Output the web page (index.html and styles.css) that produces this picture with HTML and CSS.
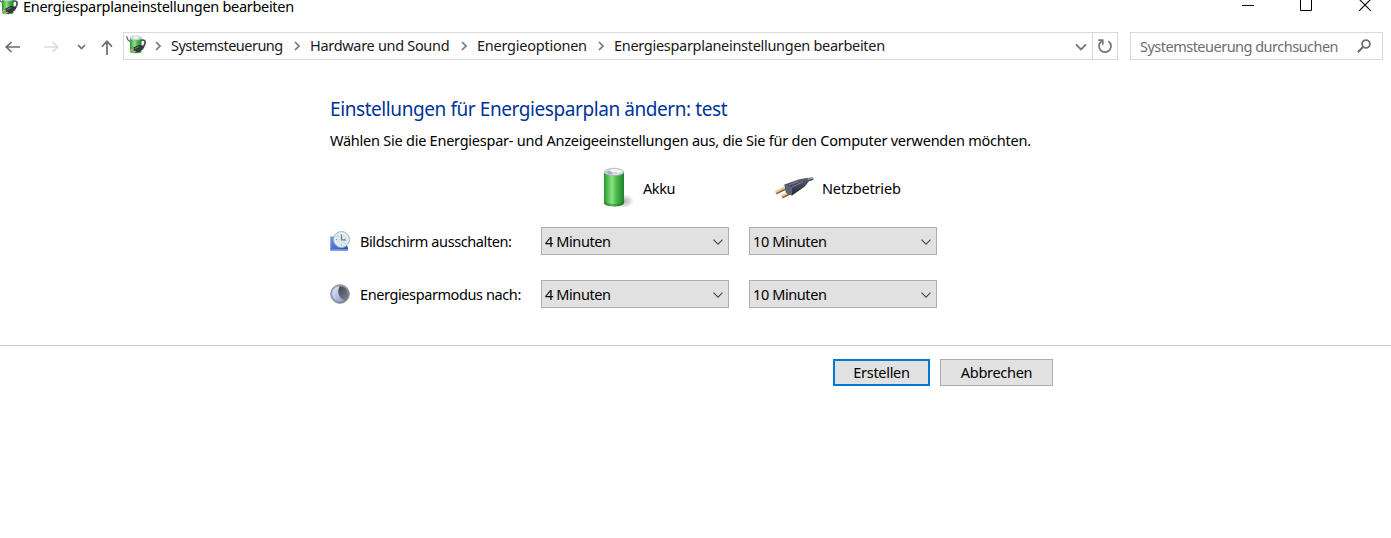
FILE: index.html
```
<!DOCTYPE html>
<html lang="de">
<head>
  <meta charset="UTF-8">
  <meta name="viewport" content="width=device-width, initial-scale=1.0">
  <title>Energiesparplaneinstellungen bearbeiten</title>
  <link rel="stylesheet" href="styles.css">
</head>
<body>

  <!-- shared icons -->
  <svg class="sprite" width="0" height="0">
    <defs>
      <linearGradient id="green" x1="0" x2="1" y1="0" y2="0">
        <stop offset="0" stop-color="#2c9433"/>
        <stop offset=".2" stop-color="#55c353"/>
        <stop offset=".4" stop-color="#8fe088"/>
        <stop offset=".6" stop-color="#4dbf4e"/>
        <stop offset="1" stop-color="#1d8028"/>
      </linearGradient>
      <linearGradient id="plug" x1="0" x2=".3" y1="0" y2="1">
        <stop offset="0" stop-color="#777d8c"/>
        <stop offset=".5" stop-color="#454b5c"/>
        <stop offset="1" stop-color="#202432"/>
      </linearGradient>
      <radialGradient id="shadow">
        <stop offset="0" stop-color="#777" stop-opacity=".6"/>
        <stop offset="1" stop-color="#777" stop-opacity="0"/>
      </radialGradient>
      <linearGradient id="screen" x1="0" x2="1" y1="0" y2="1">
        <stop offset="0" stop-color="#6f9aea"/>
        <stop offset="1" stop-color="#2547b5"/>
      </linearGradient>
      <linearGradient id="ring" x1="0" x2="1" y1="0" y2="1">
        <stop offset="0" stop-color="#b5bac3"/>
        <stop offset="1" stop-color="#686d77"/>
      </linearGradient>
      <linearGradient id="moon" x1="0" x2="1" y1="0" y2="1">
        <stop offset="0" stop-color="#e8efff"/>
        <stop offset="1" stop-color="#8297cf"/>
      </linearGradient>
      <linearGradient id="night" x1="0" x2="1" y1="0" y2="1">
        <stop offset="0" stop-color="#30333a"/>
        <stop offset="1" stop-color="#858993"/>
      </linearGradient>
      <symbol id="power" viewBox="0 0 20 20">
        <path d="M.7 1.200C1 4.500 2.500 6 5 6.500" fill="none" stroke="#59647a" stroke-width="1.300"/>
        <path d="M14.500 5.500c4-1.500 5.200.5 4.300 3.500-.7 2.500-2.300 3.500-2.700 5.500" fill="none" stroke="#40485c" stroke-width="1.700"/>
        <path d="M4 3v13.500c0 2.500 11.500 2.500 11.500 0V3z" fill="url(#green)"/>
        <ellipse cx="9.750" cy="3" rx="5.700" ry="2" fill="#d5dbe6" stroke="#9bb5ae" stroke-width=".5"/>
        <ellipse cx="9.750" cy="2.400" rx="2.500" ry="1" fill="#fff"/>
        <path d="M6.500 13l6-3 5 .5.500 2-4 4-5 1.500z" fill="#343640"/>
        <path d="M8 13.500l-4 2.300M10 16l-3.500 2" stroke="#c9a878" stroke-width="1.400"/>
        <path d="M9 13.500l4-1.800" stroke="#777c88" stroke-width="1"/>
      </symbol>
      <symbol id="chevron" viewBox="0 0 6 10">
        <path d="M1 1l4 4-4 4" fill="none" stroke="#777" stroke-width="1.700"/>
      </symbol>
    </defs>
  </svg>

  <div class="titlebar">
    <svg class="app-icon"><use href="#power"/></svg>
    <span class="window-title">Energiesparplaneinstellungen bearbeiten</span>
    <div class="window-controls">
      <svg width="12" height="12"><path d="M0 6.500h12" stroke="#000"/></svg>
      <svg width="12" height="12"><path d="M.5.5h11v11H.5z" fill="none" stroke="#000"/></svg>
      <svg width="12" height="12"><path d="M.2.200l11.600 11.600M11.800.200L.2 11.800" stroke="#000" stroke-width="1.100"/></svg>
    </div>
  </div>

  <nav class="navbar">
    <div class="arrows">
      <svg width="15" height="12"><path d="M15 6H1M6.500 1L1.200 6l5.300 5" fill="none" stroke="#6d6d6d" stroke-width="1.700"/></svg>
      <svg width="15" height="12"><path d="M0 6h14M8.500 1l5.300 5-5.300 5" fill="none" stroke="#dadada" stroke-width="1.700"/></svg>
      <svg width="9" height="6"><path d="M1 1l3.500 3.500L8 1" fill="none" stroke="#6d6d6d" stroke-width="1.700"/></svg>
      <svg width="12" height="15"><path d="M6 15V1M1 6.700L6 1.300l5 5.400" fill="none" stroke="#6d6d6d" stroke-width="1.700"/></svg>
    </div>
    <div class="address">
      <svg class="address-icon"><use href="#power"/></svg>
      <svg class="sep"><use href="#chevron"/></svg>
      <span class="crumb crumb-panel">Systemsteuerung</span>
      <svg class="sep"><use href="#chevron"/></svg>
      <span class="crumb crumb-hardware">Hardware und Sound</span>
      <svg class="sep"><use href="#chevron"/></svg>
      <span class="crumb crumb-energy">Energieoptionen</span>
      <svg class="sep"><use href="#chevron"/></svg>
      <span class="crumb crumb-edit">Energiesparplaneinstellungen bearbeiten</span>
      <svg class="address-drop" width="12" height="8"><path d="M1 1.300l5 5 5-5" fill="none" stroke="#777" stroke-width="1.900"/></svg>
      <div class="refresh">
        <svg width="16" height="16"><path d="M11.300 3.200a6 6 0 1 1-6.600 0" fill="none" stroke="#777" stroke-width="1.800"/><path d="M1.300 2.200h4.500v4.600" fill="none" stroke="#777" stroke-width="1.700"/></svg>
      </div>
    </div>
    <div class="search">
      <span>Systemsteuerung durchsuchen</span>
      <svg width="14" height="14"><circle cx="9" cy="5" r="3.900" fill="none" stroke="#707070" stroke-width="1.800"/><path d="M6.200 7.800L.8 13.200" stroke="#707070" stroke-width="2.100"/></svg>
    </div>
  </nav>

  <main class="content">
    <h1>Einstellungen für Energiesparplan ändern: test</h1>
    <p class="intro">Wählen Sie die Energiespar- und Anzeigeeinstellungen aus, die Sie für den Computer verwenden möchten.</p>

    <div class="plan">
      <div class="source source-battery">
        <svg width="32" height="42" viewBox="0 0 32 42">
          <ellipse cx="22" cy="34" rx="10" ry="7" fill="url(#shadow)"/>
          <path d="M2 5v31c0 4.500 20 4.500 20 0V5z" fill="url(#green)"/>
          <path d="M2 34v2c0 4.500 20 4.500 20 0v-2c-1 4-19 4-20 0z" fill="#147022" opacity=".45"/>
          <ellipse cx="12" cy="5" rx="9.800" ry="3.700" fill="#d6d9e6" stroke="#9cbca3" stroke-width=".7"/>
          <path d="M4 5l5-2 2 4-4 .5z" fill="#a9adca"/>
          <path d="M13 2l7 2-4 2z" fill="#fff"/>
          <ellipse cx="12" cy="3.500" rx="4" ry="1.500" fill="#f4f5fa"/>
        </svg>
        <span>Akku</span>
      </div>
      <div class="source source-plug">
        <svg width="40" height="22" viewBox="0 0 40 22">
          <path d="M2 16l10-5M8 20l10-5" stroke="#8b6840" stroke-width="3.200"/>
          <path d="M1.500 15l10-5M7.500 19l10-5" stroke="#efd0a4" stroke-width="2"/>
          <path d="M10.500 7.500L25 2.200 32 .9l7-.4.500 2.500-4.500 1.200-4.500 5.600L18 18.500l-6-2.700z" fill="url(#plug)"/>
          <path d="M10.500 7.500L18 10v8.500l-6-2.700z" fill="#5b6275"/>
          <path d="M18 10l11-5M15 8l9-3.500" stroke="#7d8495" stroke-width=".8"/>
          <path d="M34 2l5-1.200" stroke="#9b9994" stroke-width="1.300"/>
        </svg>
        <span>Netzbetrieb</span>
      </div>

      <div class="setting">
        <svg width="20" height="20" viewBox="0 0 20 20">
          <path d="M.3 5.500h13.500L18 17v2.700H.3z" fill="url(#screen)"/>
          <path d="M.3 18.600l17.700-.3v1.400H.3z" fill="#8fabe8"/>
          <circle cx="11.500" cy="8.500" r="8" fill="#cfdbe4" stroke="#aab8c3"/>
          <circle cx="11.500" cy="8.500" r="6.600" fill="#dde8ee" stroke="#f4f8fa" stroke-width=".8"/>
          <path d="M11.500 3.500v5.300h4.500" fill="none" stroke="#6d8294" stroke-width="1.200"/>
          <path d="M6 8.500h1M11.500 13.500v1M7.500 4.500l.7.700M15.500 12.500l.6.600" stroke="#8496a4"/>
        </svg>
        <label for="display-battery">Bildschirm ausschalten:</label>
      </div>
      <div class="dropdown">
        <select id="display-battery"><option>4 Minuten</option></select>
        <svg width="10" height="6"><path d="M.5.700L5 5.200 9.500.7" fill="none" stroke="#444" stroke-width="1.100"/></svg>
      </div>
      <div class="dropdown">
        <select><option>10 Minuten</option></select>
        <svg width="10" height="6"><path d="M.5.700L5 5.200 9.500.7" fill="none" stroke="#444" stroke-width="1.100"/></svg>
      </div>

      <div class="setting">
        <svg width="20" height="20" viewBox="0 0 20 20">
          <circle cx="10" cy="10" r="9.300" fill="url(#ring)" stroke="#8a8f98"/>
          <circle cx="10" cy="10" r="7.800" fill="url(#night)"/>
          <path d="M10 2.200A7.800 7.800 0 1 0 14.500 16.300C9.500 14.500 6 8 10 2.200z" fill="url(#moon)"/>
        </svg>
        <label class="label-sleep" for="sleep-battery">Energiesparmodus nach:</label>
      </div>
      <div class="dropdown">
        <select id="sleep-battery"><option>4 Minuten</option></select>
        <svg width="10" height="6"><path d="M.5.700L5 5.200 9.500.7" fill="none" stroke="#444" stroke-width="1.100"/></svg>
      </div>
      <div class="dropdown">
        <select><option>10 Minuten</option></select>
        <svg width="10" height="6"><path d="M.5.700L5 5.200 9.500.7" fill="none" stroke="#444" stroke-width="1.100"/></svg>
      </div>
    </div>
  </main>

  <footer class="actions">
    <button class="btn btn-default">Erstellen</button>
    <button class="btn btn-cancel">Abbrechen</button>
  </footer>

</body>
</html>
```
FILE: styles.css
```
* {
  box-sizing: border-box;
  margin: 0;
  padding: 0;
}

body {
  background: #fff;
  color: #000;
  font-family: "Noto Sans", "Open Sans", sans-serif;
  font-size: 14.5px;
  line-height: 20px;
  letter-spacing: -0.4px;
  white-space: nowrap;
  overflow: hidden;
}

svg {
  display: block;
  flex: none;
}

.sprite {
  position: absolute;
}

/* title bar */
.titlebar {
  display: flex;
  align-items: flex-start;
  height: 21px;
}

.app-icon {
  width: 20px;
  height: 20px;
  margin: -4px 5px 0 -2px;
}

.window-title {
  line-height: 13px;
  letter-spacing: -0.3px;
}

.window-controls {
  display: flex;
  gap: 47px;
  margin: 0 20px 0 auto;
}

.window-controls svg:first-child {
  margin-right: -1px;
}

.window-controls svg {
  margin-top: -1px;
}

/* navigation */
.navbar {
  display: flex;
  align-items: center;
  height: 28px;
  margin-top: 11px;
  padding-right: 8px;
}

.arrows {
  display: flex;
  align-items: center;
  width: 123px;
  padding: 2px 0 0 5px;
}

.arrows svg:nth-child(2) {
  margin-left: 24px;
}

.arrows svg:nth-child(3) {
  margin-left: 18px;
}

.arrows svg:nth-child(4) {
  margin-left: 15px;
}

.address {
  display: flex;
  align-items: center;
  width: 995px;
  height: 28px;
  border: 1px solid #d9d9d9;
}

.address-icon {
  width: 20px;
  height: 20px;
  margin: -2px 9px 0 2px;
}

.sep {
  width: 6px;
  height: 10px;
  margin-right: 10px;
}

.crumb {
  padding-bottom: 2px;
  color: #191919;
}

.crumb-panel {
  width: 123px;
  letter-spacing: -0.53px;
}

.crumb-hardware {
  width: 151px;
  letter-spacing: -0.31px;
}

.crumb-energy {
  width: 121px;
  letter-spacing: -0.24px;
}

.crumb-edit {
  letter-spacing: -0.3px;
}

.address-drop {
  margin: 2px 5px 0 auto;
}

.refresh {
  display: flex;
  align-items: center;
  justify-content: center;
  width: 25px;
  height: 100%;
  border-left: 1px solid #d9d9d9;
}

.search {
  display: flex;
  align-items: center;
  justify-content: space-between;
  flex: 1;
  height: 28px;
  margin-left: 12px;
  padding: 0 11px 0 9px;
  border: 1px solid #d9d9d9;
  color: #6d6d6d;
  letter-spacing: -0.51px;
}

/* plan settings */
.content {
  height: 285px;
  padding: 37px 0 0 330px;
}

h1 {
  color: #003399;
  font-size: 19px;
  font-weight: 400;
  line-height: 24px;
  letter-spacing: -0.42px;
}

.intro {
  margin-top: 9px;
  letter-spacing: -0.24px;
}

.plan {
  display: grid;
  grid-template-columns: 191px 188px 188px;
  grid-template-rows: 60px 53px 28px;
  column-gap: 20px;
  align-items: start;
  margin-top: 17px;
}

.plan > :nth-child(n + 3) {
  margin-top: 0;
}

.source {
  display: flex;
  align-items: center;
  height: 42px;
}

.source-battery {
  grid-column: 2;
  gap: 9px;
  padding-left: 61px;
}

.source-plug {
  gap: 8px;
  padding-left: 25px;
  letter-spacing: -0.15px;
}

.setting {
  display: flex;
  align-items: center;
  gap: 10px;
  height: 28px;
}

.dropdown {
  position: relative;
  height: 28px;
}

.dropdown select {
  width: 188px;
  height: 28px;
  padding: 0 3px 1px;
  appearance: none;
  background: #e1e1e1;
  border: 1px solid #adadad;
  border-radius: 0;
  color: #000;
  font: inherit;
  letter-spacing: inherit;
}

.dropdown svg {
  position: absolute;
  top: 12px;
  right: 6px;
  pointer-events: none;
}

/* bottom buttons */
.actions {
  display: flex;
  gap: 10px;
  padding: 13px 0 0 833px;
  border-top: 1px solid #ccc;
}

.btn {
  height: 27px;
  padding-bottom: 2px;
  background: #e1e1e1;
  border: 1px solid #adadad;
  color: #000;
  font: inherit;
  letter-spacing: -0.3px;
}

.btn-default {
  width: 97px;
  border: 2px solid #0078d7;
}

.btn-cancel {
  width: 113px;
}
```
